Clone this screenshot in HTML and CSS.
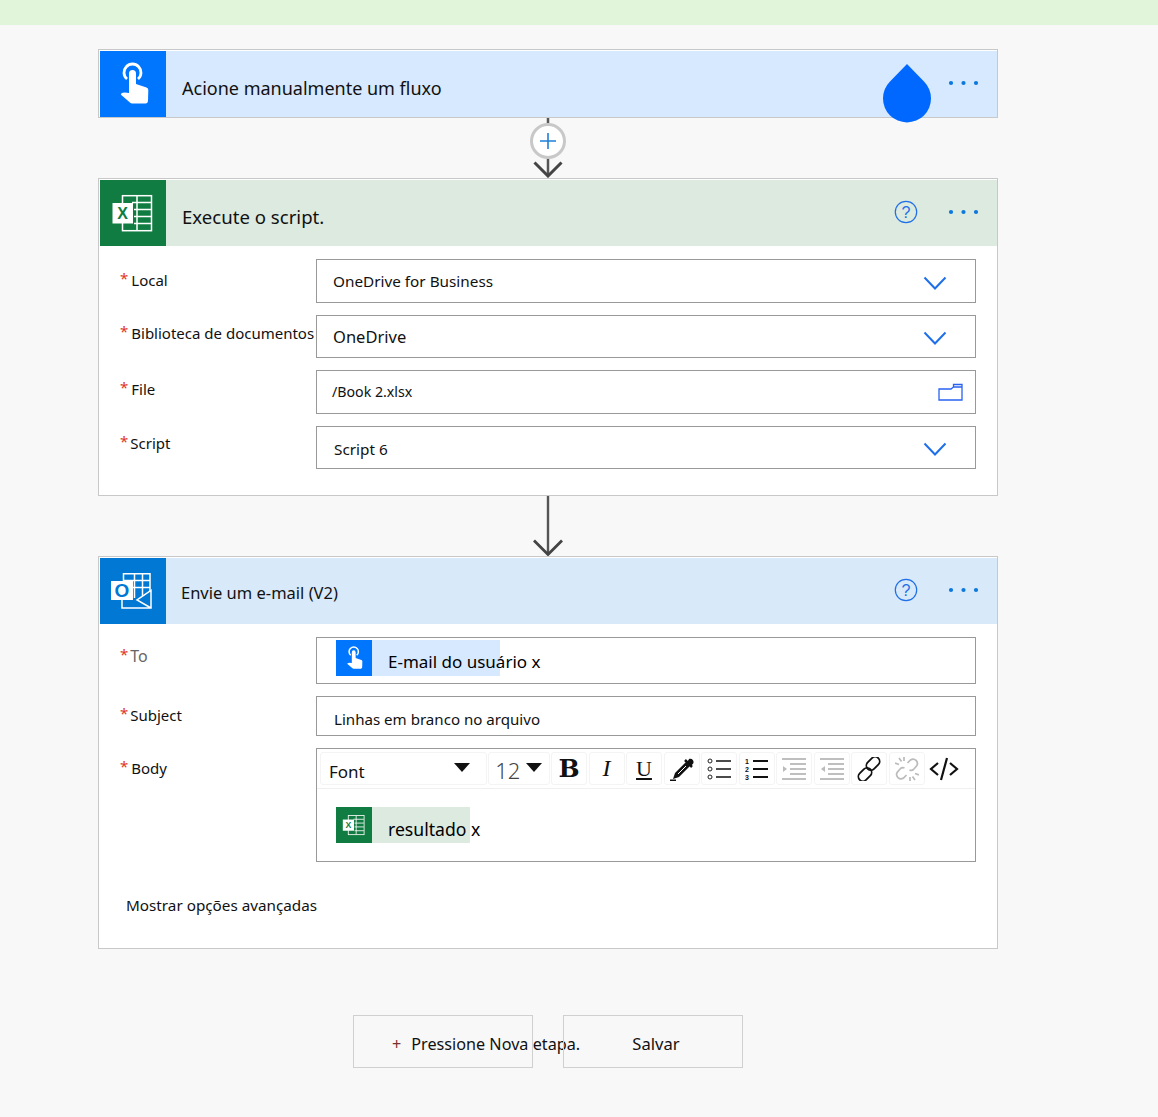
FILE: index.html
```html
<!DOCTYPE html>
<html lang="pt-BR">
<head>
    <meta charset="UTF-8">
    <meta name="viewport" content="width=device-width, initial-scale=1.0">
    <title>Fluxo</title>
    <link rel="stylesheet" href="styles.css">
</head>
<body>
    <!-- icones reutilizados -->
    <svg class="defs" width="0" height="0">
        <symbol id="i-touch" viewBox="0 0 66 66">
            <path d="M27 28a8.500 8.500 0 1 1 11 0" fill="none" stroke="#fff" stroke-width="2.800"/>
            <path d="M29 22.500a3.500 3.500 0 0 1 7 0V33l10.500 3.500q1.900.7 1.800 2.800L48 50q-.2 2.500-2.500 2.500H32q-1 0-1.800-.8L21 43.800q-.4-.6.3-1.300 1.500-1.500 7.700-.5z" fill="#fff"/>
        </symbol>
        <symbol id="i-excel" viewBox="0 0 66 66">
            <rect x="22.500" y="15.700" width="29" height="35" fill="none" stroke="#fff" stroke-width="1.500"/>
            <path d="M37 16v34M32 22.500h19M34 29.500h17M34 36.500h17M34 43.500h17" stroke="#fff" stroke-width="1.500" fill="none"/>
            <rect x="12.500" y="23" width="20.500" height="20.500" fill="#fff"/>
        </symbol>
        <symbol id="i-outlook" viewBox="0 0 66 66">
            <path d="M23.500 24V15.700h26.500V34" fill="none" stroke="#fff" stroke-width="1.500"/>
            <path d="M34.500 16v24M42.500 16v22M24 22.500h26M33 29.500h17" stroke="#fff" stroke-width="1.500" fill="none"/>
            <path d="M22 40v10h29V32.500l-14 9.500 14 8" fill="#0078d4" stroke="#fff" stroke-width="1.500"/>
            <rect x="11" y="23" width="22" height="19" fill="#fff"/>
        </symbol>
        <symbol id="i-chevron" viewBox="0 0 24 14">
            <path d="M1.500 1.500L12 12.500 22.500 1.500" fill="none" stroke="#1f6fe8" stroke-width="2"/>
        </symbol>
        <symbol id="i-dots" viewBox="0 0 32 6">
            <circle cx="3" cy="3" r="2.100" fill="#0a78dc"/>
            <circle cx="15.500" cy="3" r="2.100" fill="#0a78dc"/>
            <circle cx="28" cy="3" r="2.100" fill="#0a78dc"/>
        </symbol>
        <symbol id="i-help" viewBox="0 0 24 24">
            <circle cx="12" cy="12" r="10.700" fill="none" stroke="#1f6fe8" stroke-width="1.200"/>
        </symbol>
    </svg>

    <div class="banner"></div>

    <main class="flow">
        <!-- gatilho -->
        <section class="card">
            <header class="card-head head-touch">
                <div class="card-icon icon-touch"><svg class="logo" viewBox="0 0 66 66"><use href="#i-touch"/></svg></div>
                <h2 class="card-title title-lg">Acione manualmente um fluxo</h2>
                <svg class="dots"><use href="#i-dots"/></svg>
            </header>
            <svg class="drop" viewBox="0 0 48 59"><path d="M24 0L7 17.500a24 24 0 1 0 34 0z" fill="#0068ff"/></svg>
        </section>

        <svg class="link" width="40" height="60" viewBox="0 0 40 60">
            <path d="M20 0v8M20 40v18" stroke="#555" stroke-width="2.500" fill="none"/>
            <path d="M6.500 44.500L20 58 33.500 44.500" stroke="#444" stroke-width="3" fill="none"/>
            <circle cx="20" cy="23" r="16.500" fill="#fff" stroke="#c8c8c8" stroke-width="3"/>
            <path d="M20 15v16M12 23h16" stroke="#1e7fd8" stroke-width="1.600" fill="none"/>
        </svg>

        <!-- excel -->
        <section class="card">
            <header class="card-head head-excel">
                <div class="card-icon icon-excel"><svg class="logo" viewBox="0 0 66 66"><use href="#i-excel"/><text x="22.700" y="39" text-anchor="middle" class="badge-x">X</text></svg></div>
                <h2 class="card-title title-lg title-wide">Execute o script.</h2>
                <svg class="help" viewBox="0 0 24 24"><use href="#i-help"/><text x="12" y="17.500" text-anchor="middle" class="help-mark">?</text></svg>
                <svg class="dots"><use href="#i-dots"/></svg>
            </header>
            <div class="card-body body-excel">
                <div class="row">
                    <label class="lbl"><span class="req">*</span>Local</label>
                    <div class="field h44"><span class="val val-up">OneDrive for Business</span><svg class="chev"><use href="#i-chevron"/></svg></div>
                </div>
                <div class="row">
                    <label class="lbl lbl-up"><span class="req">*</span>Biblioteca de documentos</label>
                    <div class="field h43"><span class="val val-big val-up">OneDrive</span><svg class="chev"><use href="#i-chevron"/></svg></div>
                </div>
                <div class="row">
                    <label class="lbl lbl-file"><span class="req">*</span>File</label>
                    <div class="field h44"><span class="val val-small">/Book 2.xlsx</span>
                        <svg class="folder" viewBox="0 0 25 18"><path d="M1 6h12l2.500-2V1.500H24V17H1zM15.500 4H24" fill="none" stroke="#2a62f0" stroke-width="1.300"/></svg>
                    </div>
                </div>
                <div class="row">
                    <label class="lbl lbl-tight lbl-script"><span class="req">*</span>Script</label>
                    <div class="field h43"><span class="val val-script">Script 6</span><svg class="chev"><use href="#i-chevron"/></svg></div>
                </div>
            </div>
        </section>

        <svg class="link" width="40" height="60" viewBox="0 0 40 60">
            <path d="M20 0v58" stroke="#555" stroke-width="2.400" fill="none"/>
            <path d="M6 44.500L20 58.500 34 44.500" stroke="#444" stroke-width="2.800" fill="none"/>
        </svg>

        <!-- email -->
        <section class="card">
            <header class="card-head head-mail">
                <div class="card-icon icon-mail"><svg class="logo" viewBox="0 0 66 66"><use href="#i-outlook"/><text x="22" y="38.500" text-anchor="middle" class="badge-o">O</text></svg></div>
                <h2 class="card-title title-md">Envie um e-mail (V2)</h2>
                <svg class="help" viewBox="0 0 24 24"><use href="#i-help"/><text x="12" y="17.500" text-anchor="middle" class="help-mark">?</text></svg>
                <svg class="dots"><use href="#i-dots"/></svg>
            </header>
            <div class="card-body body-mail">
                <div class="row">
                    <label class="lbl lbl-tight lbl-to"><span class="req">*</span>To</label>
                    <div class="field h47 field-chip">
                        <div class="chip chip-user">
                            <div class="chip-icon icon-touch"><svg class="chip-logo" viewBox="0 0 66 66"><use href="#i-touch"/></svg></div>
                            <span class="chip-text">E-mail do usuário x</span>
                        </div>
                    </div>
                </div>
                <div class="row">
                    <label class="lbl lbl-tight lbl-subject"><span class="req">*</span>Subject</label>
                    <div class="field h40"><span class="val val-subject">Linhas em branco no arquivo</span></div>
                </div>
                <div class="row">
                    <label class="lbl lbl-body"><span class="req">*</span>Body</label>
                    <div class="editor">
                        <div class="toolbar">
                            <div class="tool tool-font"><span>Font</span><i class="caret"></i></div>
                            <div class="tool tool-size"><span>12</span><i class="caret"></i></div>
                            <div class="tool tool-b">B</div>
                            <div class="tool tool-i">I</div>
                            <div class="tool tool-u">U</div>
                            <div class="tool">
                                <svg class="ti" viewBox="0 0 24 24"><path d="M5 16L16 5l4 4L9 20l-6 2z" fill="#111"/><path d="M15 3l7 7M18 6l2-3a2 2 0 0 1 2 3l-2 2" stroke="#111" stroke-width="2.500" fill="#111"/><path d="M8 17l8-8" stroke="#fff" stroke-width="1"/><path d="M0 23.500h6" stroke="#111" stroke-width="2"/></svg>
                            </div>
                            <div class="tool">
                                <svg class="ti" viewBox="0 0 24 24"><g fill="none" stroke="#222" stroke-width="1"><circle cx="3" cy="4" r="2"/><circle cx="3" cy="12" r="2"/><circle cx="3" cy="20" r="2"/></g><path d="M9 4h15M9 12h15M9 20h15" stroke="#111" stroke-width="1.300"/></svg>
                            </div>
                            <div class="tool">
                                <svg class="ti" viewBox="0 0 24 24"><text x="0" y="6.500" class="num">1</text><text x="0" y="14.500" class="num">2</text><text x="0" y="22.500" class="num">3</text><path d="M8 4h15M8 12h15M8 20h15" stroke="#111" stroke-width="2"/></svg>
                            </div>
                            <div class="tool">
                                <svg class="ti" viewBox="0 0 24 24"><path d="M0 2h24M8 7h16M8 12h16M8 17h16M0 22h24" stroke="#aaa" stroke-width="1.600"/><path d="M1 9l4 3-4 3z" fill="#bbb"/></svg>
                            </div>
                            <div class="tool">
                                <svg class="ti" viewBox="0 0 24 24"><path d="M0 2h24M8 7h16M8 12h16M8 17h16M0 22h24" stroke="#aaa" stroke-width="1.600"/><path d="M5 9l-4 3 4 3z" fill="#bbb"/></svg>
                            </div>
                            <div class="tool">
                                <svg class="ti" viewBox="0 0 24 24"><g fill="none" stroke="#111" stroke-width="1.800"><rect x="8.500" y="2" width="15" height="9" rx="4.500" transform="rotate(-45 16 6.500)"/><rect x=".500" y="13" width="15" height="9" rx="4.500" transform="rotate(-45 8 17.500)"/></g></svg>
                            </div>
                            <div class="tool">
                                <svg class="ti" viewBox="0 0 24 24"><g fill="none" stroke="#bbb" stroke-width="1.700"><path d="M12.500 6l3-3a4.300 4.300 0 0 1 6 6l-3 3.500q-2 1.500-4 .5M11.500 18l-3 3a4.300 4.300 0 0 1-6-6l3-3.500q2-1.500 4-.5"/><path d="M4 1l2.500 3.500M0 6l4 1.500M9 0v4M20 23l-2.500-3.500M24 18l-4-1.500M15 24v-4"/></g></svg>
                            </div>
                            <div class="tool tool-plain">
                                <svg class="ti ti-code" viewBox="0 0 30 24"><path d="M9 6l-7 6 7 6M21 6l7 6-7 6M18 1l-6 22" fill="none" stroke="#111" stroke-width="2.200"/></svg>
                            </div>
                        </div>
                        <div class="editor-text">
                            <div class="chip chip-excel">
                                <div class="chip-icon icon-excel"><svg class="chip-logo" viewBox="0 0 66 66"><use href="#i-excel"/><text x="22.700" y="39" text-anchor="middle" class="badge-x">X</text></svg></div>
                                <span class="chip-text chip-text-big">resultado x</span>
                            </div>
                        </div>
                    </div>
                </div>
                <p class="advanced">Mostrar opções avançadas</p>
            </div>
        </section>

        <div class="actions">
            <button class="btn btn-new"><span class="plus">+</span>Pressione Nova etapa.</button>
            <button class="btn btn-save">Salvar</button>
        </div>
    </main>
</body>
</html>
```

FILE: styles.css
```css
* {
    box-sizing: border-box;
}
body {
    margin: 0;
    min-height: 1117px;
    background-color: #f8f8f8;
    color: #111;
    font-family: "Noto Sans", "Liberation Sans", sans-serif;
    font-size: 15px;
}
.defs {
    position: absolute;
}
.badge-x {
    font: 700 16px "Liberation Sans", sans-serif;
    fill: #107c41;
}
.badge-o {
    font: 700 19px "Liberation Sans", sans-serif;
    fill: #0078d4;
}
.help-mark {
    font: 400 16px "Liberation Sans", sans-serif;
    fill: #1f6fe8;
}
.num {
    font: 700 7px "Liberation Sans", sans-serif;
    fill: #111;
}
.banner {
    height: 25px;
    background-color: #e0f5da;
}
.flow {
    width: 900px;
    margin: 24px 0 0 98px;
    display: flex;
    flex-direction: column;
    align-items: center;
}
.card {
    position: relative;
    width: 100%;
    padding: 1px 0 0 1px;
    background-color: #fff;
    border: 1px solid #c8c8c8;
}
.card-head {
    display: flex;
    align-items: center;
    height: 66px;
}
.head-touch {
    background-color: #d7e9fe;
}
.head-excel {
    background-color: #dceae0;
}
.head-mail {
    background-color: #d8e9f9;
}
.card-icon {
    flex: none;
    width: 66px;
    height: 66px;
}
.icon-touch {
    background-color: #0076ff;
}
.icon-excel {
    background-color: #107c41;
}
.icon-mail {
    background-color: #0078d4;
}
.logo {
    display: block;
    width: 66px;
    height: 66px;
}
.card-title {
    margin: 7px auto 0 16px;
    font-weight: 400;
    color: #111;
}
.title-lg {
    font-size: 18px;
}
.title-wide {
    font-size: 18.600px;
}
.title-md {
    margin-left: 15px;
    margin-top: 3px;
    font-size: 16.500px;
}
.dots {
    flex: none;
    width: 32px;
    height: 6px;
    margin: 0 17px 2px 30px;
}
.help {
    flex: none;
    width: 24px;
    height: 24px;
    margin-bottom: 2px;
}
.drop {
    position: absolute;
    top: 14px;
    left: 784px;
    width: 48px;
    height: 59px;
}
.link {
    flex: none;
    display: block;
}
.card-body {
    padding: 13px 21px 0 20px;
    display: flex;
    flex-direction: column;
    gap: 12px;
}
.body-excel {
    padding-bottom: 26px;
}
.row {
    display: flex;
    align-items: flex-start;
}
.lbl {
    flex: none;
    width: 196px;
    padding-top: 9px;
    font-size: 15px;
    white-space: nowrap;
}
.lbl-up {
    padding-top: 6px;
}
.lbl-file {
    padding-top: 7px;
}
.lbl-script {
    padding-top: 5px;
}
.lbl-subject {
    padding-top: 7px;
}
.lbl-body {
    padding-top: 8px;
}
.lbl-tight .req {
    margin-right: 2px;
}
.lbl-to {
    color: #666;
    font-size: 16px;
    padding-top: 7px;
}
.req {
    display: inline-block;
    margin-right: 3px;
    color: #e0352b;
    font-size: 15px;
    vertical-align: 2px;
}
.field {
    flex: 1;
    display: flex;
    align-items: center;
    justify-content: space-between;
    padding: 3px 28px 0 16px;
    background-color: #fff;
    border: 1px solid #999;
}
.h40 {
    height: 40px;
}
.h43 {
    height: 43px;
}
.h44 {
    height: 44px;
}
.h47 {
    height: 47px;
}
.val {
    font-size: 15.300px;
    white-space: nowrap;
}
.val-up {
    margin-top: -4px;
}
.val-big {
    font-size: 16.500px;
}
.val-small {
    font-size: 14.200px;
    margin: -4px 0 0 -1px;
}
.val-script {
    margin-left: 1px;
}
.val-subject {
    margin: 2px 0 0 1px;
    font-size: 15.100px;
}
.chev {
    width: 24px;
    height: 14px;
    flex: none;
}
.folder {
    width: 25px;
    height: 18px;
    flex: none;
    margin-right: -16px;
    margin-top: -3px;
}
.field-chip {
    padding: 2px 19px 0;
    align-items: flex-start;
}
.chip {
    display: flex;
    height: 36px;
}
.chip-user {
    width: 164px;
    background-color: #d7e9fe;
}
.chip-excel {
    width: 134px;
    background-color: #dceae0;
}
.chip-icon {
    flex: none;
    width: 36px;
    height: 36px;
}
.chip-logo {
    display: block;
    width: 36px;
    height: 36px;
}
.chip-text {
    margin: 11px 0 0 16px;
    font-size: 17px;
    line-height: 22px;
    white-space: nowrap;
    color: #000;
}
.chip-text-big {
    font-size: 17.600px;
}
.editor {
    flex: 1;
    height: 114px;
    background-color: #fff;
    border: 1px solid #999;
}
.toolbar {
    display: flex;
    gap: 1.500px;
    height: 40px;
    padding: 3px;
    border-bottom: 1px solid #f0f0f0;
}
.tool {
    flex: none;
    display: flex;
    align-items: center;
    justify-content: center;
    width: 36px;
    height: 33px;
    border: 1px solid #f4f4f4;
    border-radius: 3px;
}
.tool-plain {
    border-color: transparent;
}
.tool-font {
    width: 166.500px;
    justify-content: space-between;
    padding: 6px 16px 0 8px;
    font-size: 17px;
}
.tool-size {
    width: 61.500px;
    gap: 6px;
    font-size: 22px;
    color: #444;
    font-weight: 300;
    padding-top: 3px;
}
.tool-font .caret {
    margin-top: -8px;
}
.caret {
    flex: none;
    margin-top: -5px;
    border-left: 8px solid transparent;
    border-right: 8px solid transparent;
    border-top: 9px solid #111;
}
.tool-b {
    font: 700 25px "DejaVu Serif", serif;
}
.tool-i {
    font: italic 400 24px "Liberation Serif", serif;
}
.tool-u {
    font: 400 22px "Liberation Serif", serif;
    text-decoration: underline;
}
.ti {
    width: 24px;
    height: 24px;
}
.ti-code {
    width: 30px;
}
.editor-text {
    padding: 18px 19px 0;
}
.advanced {
    margin: 20px 0 32px 6px;
    font-size: 15.250px;
    line-height: 22px;
}
.actions {
    display: flex;
    gap: 30px;
    margin-top: 66px;
}
.btn {
    width: 180px;
    height: 53px;
    padding: 4px 0 0 6px;
    background: none;
    border: 1px solid #d0d0d0;
    font-family: inherit;
    font-size: 16.600px;
    color: #111;
    white-space: nowrap;
    cursor: pointer;
}
.btn-new {
    display: flex;
    align-items: center;
    padding: 4px 0 0 38px;
    font-size: 16.200px;
}
.plus {
    margin-right: 10px;
    color: #7a3030;
}
```
